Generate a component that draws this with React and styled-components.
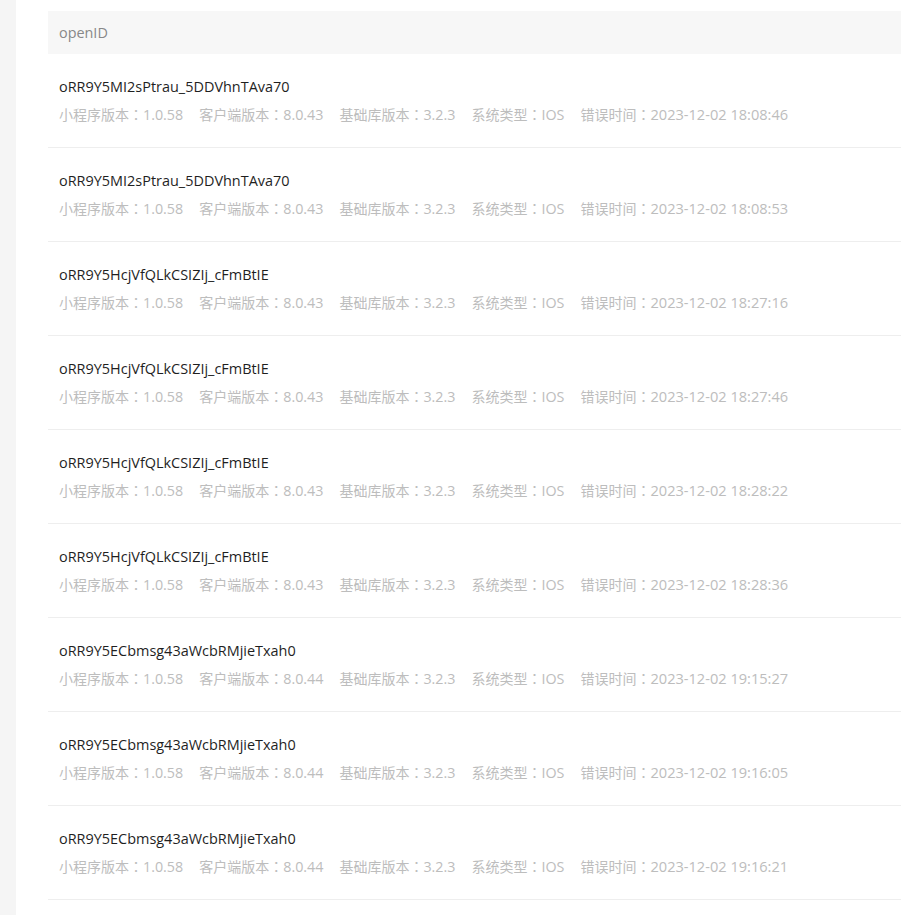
import React from "react";
import styled, { createGlobalStyle } from "styled-components";

const Global = createGlobalStyle`
  html, body { margin: 0; padding: 0; background: #fff; }
  body { font-family: "Open Sans", "Noto Sans CJK SC", sans-serif; }
`;

const Page = styled.div`
  display: flex;
  min-height: 915px;
`;

const SideStrip = styled.div`
  width: 16px;
  flex: none;
  background: #f5f5f5;
`;

const Main = styled.div`
  flex: 1;
  padding: 11px 0 0 32px;
  background: #fff;
`;

const Header = styled.div`
  height: 43px;
  display: flex;
  align-items: center;
  padding-left: 11px;
  background: #f7f7f7;
  color: #888;
  font-size: 14.4px;
`;

const List = styled.ul`
  list-style: none;
  margin: 0;
  padding: 0;
`;

const Row = styled.li`
  padding: 22px 11px 22px;
  border-bottom: 1px solid #eeeeee;
  display: flex;
  flex-direction: column;
  gap: 5px;
`;

const Title = styled.div`
  height: 22px;
  font-size: 14.45px;
  line-height: 22px;
  color: #1f1f1f;
`;

const Meta = styled.div`
  height: 22px;
  display: flex;
  align-items: center;
  gap: 16px;
  font-size: 14px;
  line-height: 22px;
  color: #bdbdbd;
  white-space: nowrap;
`;

const Field = styled.span`
  display: inline-flex;
  align-items: baseline;
  height: 22px;
  line-height: 22px;
`;

const Colon = styled.span`
  font-family: "Noto Sans CJK TC", sans-serif;
`;

const Value = styled.span`
  font-size: ${(p) => (p.$long ? "14.6px" : "14.3px")};
`;

const rows = [
  ["oRR9Y5MI2sPtrau_5DDVhnTAva70", "8.0.43", "2023-12-02 18:08:46"],
  ["oRR9Y5MI2sPtrau_5DDVhnTAva70", "8.0.43", "2023-12-02 18:08:53"],
  ["oRR9Y5HcjVfQLkCSIZIj_cFmBtIE", "8.0.43", "2023-12-02 18:27:16"],
  ["oRR9Y5HcjVfQLkCSIZIj_cFmBtIE", "8.0.43", "2023-12-02 18:27:46"],
  ["oRR9Y5HcjVfQLkCSIZIj_cFmBtIE", "8.0.43", "2023-12-02 18:28:22"],
  ["oRR9Y5HcjVfQLkCSIZIj_cFmBtIE", "8.0.43", "2023-12-02 18:28:36"],
  ["oRR9Y5ECbmsg43aWcbRMjieTxah0", "8.0.44", "2023-12-02 19:15:27"],
  ["oRR9Y5ECbmsg43aWcbRMjieTxah0", "8.0.44", "2023-12-02 19:16:05"],
  ["oRR9Y5ECbmsg43aWcbRMjieTxah0", "8.0.44", "2023-12-02 19:16:21"],
];

function Item({ label, value, long }) {
  return (
    <Field>
      {label}
      <Colon>：</Colon>
      <Value $long={long}>{value}</Value>
    </Field>
  );
}

export default function App() {
  return (
    <>
      <Global />
      <Page>
        <SideStrip />
        <Main>
          <Header>openID</Header>
          <List>
            {rows.map(([id, client, time], i) => (
              <Row key={i}>
                <Title>{id}</Title>
                <Meta>
                  <Item label="小程序版本" value="1.0.58" />
                  <Item label="客户端版本" value={client} />
                  <Item label="基础库版本" value="3.2.3" />
                  <Item label="系统类型" value="IOS" />
                  <Item label="错误时间" value={time} long />
                </Meta>
              </Row>
            ))}
          </List>
        </Main>
      </Page>
    </>
  );
}
